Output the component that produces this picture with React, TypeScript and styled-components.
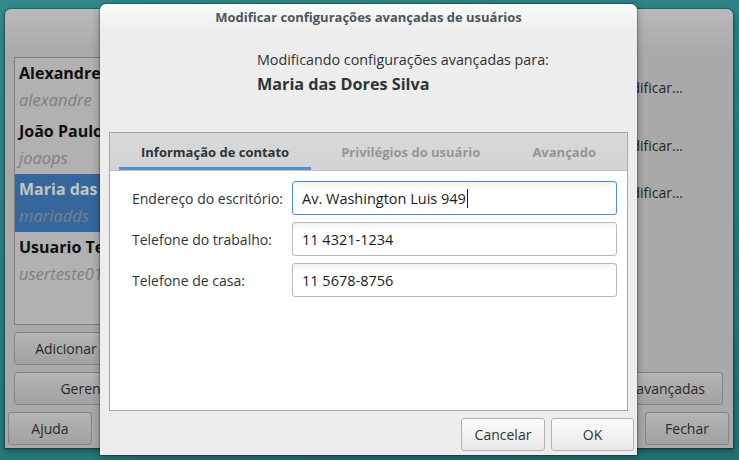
import * as React from 'react'
import styled, { createGlobalStyle } from 'styled-components'

const GlobalStyle = createGlobalStyle`
  html, body {
    margin: 0;
    padding: 0;
  }
  body {
    width: 739px;
    height: 460px;
    overflow: hidden;
    font-family: 'Open Sans', 'Noto Sans', sans-serif;
    color: #2e3436;
  }
`

const Desktop = styled.div`
  position: relative;
  width: 739px;
  height: 460px;
  overflow: hidden;
  background: linear-gradient(165deg, #32898a 0%, #2a7e7f 45%, #206f70 100%);
`

/* ---------- parent window (dimmed, behind the dialog) ---------- */

const ParentWindow = styled.div`
  position: absolute;
  left: 5px;
  top: 9px;
  width: 728px;
  height: 439px;
  box-sizing: border-box;
  border-radius: 6px 6px 0 0;
  background: linear-gradient(#bababa 0, #a9a9a9 44px, #a9a9a9 100%);
  box-shadow: 0 0 0 1px rgba(0, 0, 0, 0.18), 0 2px 5px rgba(0, 0, 0, 0.45);
  padding-top: 48px;
  display: flex;
  flex-direction: column;
`

const ParentMain = styled.div`
  display: grid;
  grid-template-columns: 1fr 1fr;
  grid-template-rows: 268px 33px 33px;
  row-gap: 7px;
  padding: 0 10px 0 9px;
`

const UserList = styled.div`
  grid-column: 1;
  grid-row: 1;
  width: 112px;
  border: 1px solid #7e7e7e;
  border-right: none;
  background: #b1b1b1;
  box-sizing: border-box;
  overflow: hidden;
`

const UserRow = styled.div<{ $selected?: boolean }>`
  height: 58px;
  box-sizing: border-box;
  padding: 5px 4px 0;
  overflow: hidden;
  background: ${(p) => (p.$selected ? '#35679c' : 'transparent')};
`

const UserName = styled.div<{ $selected?: boolean }>`
  font-size: 16px;
  font-weight: 700;
  line-height: 20px;
  color: ${(p) => (p.$selected ? '#c4c4c4' : '#0f0f0f')};
  white-space: nowrap;
`

const UserLogin = styled.div<{ $selected?: boolean }>`
  margin-top: 7px;
  font-size: 16.5px;
  font-style: italic;
  line-height: 20px;
  color: ${(p) => (p.$selected ? '#74808f' : '#7f7f7f')};
  white-space: nowrap;
`

const DetailPane = styled.div`
  grid-column: 2;
  grid-row: 1;
  display: flex;
  flex-direction: column;
  align-items: flex-end;
  padding: 21px 40px 0 0;
`

const DetailLink = styled.div<{ $gap: number }>`
  margin-top: ${(p) => p.$gap}px;
  font-size: 14px;
  line-height: 20px;
  color: #262626;
  white-space: nowrap;
`

const ParentButton = styled.div<{ $width?: number }>`
  box-sizing: border-box;
  width: ${(p) => (p.$width ? `${p.$width}px` : 'auto')};
  height: 33px;
  padding: 0 17px;
  display: flex;
  align-items: center;
  justify-content: center;
  border: 1px solid #848484;
  border-radius: 3px;
  background: linear-gradient(#b4b4b4, #a2a2a2);
  font-size: 14px;
  color: #2a2a2a;
  white-space: nowrap;
`

const LeftButtons = styled.div<{ $row: number }>`
  grid-column: 1;
  grid-row: ${(p) => p.$row};
  display: flex;
  gap: 6px;
`

const RightButtons = styled.div<{ $row: number }>`
  grid-column: 2;
  grid-row: ${(p) => p.$row};
  display: flex;
  justify-content: flex-end;
`

const ParentFooter = styled.div`
  margin-top: 7px;
  height: 34px;
  padding: 0 4px 0 3px;
  display: flex;
  justify-content: space-between;
`

/* ---------- dialog ---------- */

const Dialog = styled.div`
  position: absolute;
  left: 100px;
  top: 4px;
  width: 537px;
  height: 451px;
  box-sizing: border-box;
  border-radius: 6px 6px 0 0;
  background: linear-gradient(#fbfbfb 0, #ededed 28px, #ededed 100%);
  box-shadow: 0 0 0 1px rgba(0, 0, 0, 0.22), 0 2px 8px rgba(0, 0, 0, 0.35);
  display: flex;
  flex-direction: column;
`

const TitleBar = styled.div`
  height: 26px;
  display: flex;
  align-items: center;
  justify-content: center;
  font-size: 13px;
  font-weight: 700;
  color: #4b565c;
`

const Header = styled.div`
  height: 102px;
  box-sizing: border-box;
  padding: 20px 0 0 157px;
`

const HeaderLine = styled.div`
  font-size: 14.3px;
  line-height: 20px;
  color: #2e3436;
`

const HeaderName = styled.div`
  margin-top: 3px;
  font-size: 16.2px;
  font-weight: 700;
  line-height: 22px;
  color: #2e3436;
`

const Notebook = styled.div`
  margin: 0 9px;
  height: 279px;
  box-sizing: border-box;
  border: 1px solid #a9a9a9;
  background: #ffffff;
  display: flex;
  flex-direction: column;
`

const TabBar = styled.div`
  height: 37px;
  flex: none;
  padding: 0 9px;
  display: flex;
  gap: 8px;
  background: linear-gradient(#d9d9d9, #d3d3d3);
  border-bottom: 1px solid #c4c4c4;
`

const Tab = styled.div<{ $active?: boolean }>`
  box-sizing: border-box;
  padding: 3px 22px 0;
  display: flex;
  align-items: center;
  font-size: 13px;
  font-weight: 700;
  white-space: nowrap;
  color: ${(p) => (p.$active ? '#2e3436' : '#959595')};
  border-bottom: 3px solid ${(p) => (p.$active ? '#4a90d9' : 'transparent')};
`

const Form = styled.div`
  display: grid;
  grid-template-columns: 160px 1fr;
  grid-auto-rows: 34px;
  row-gap: 7px;
  align-items: center;
  padding: 10px 10px 0 22px;
`

const FieldLabel = styled.div`
  font-size: 14px;
  color: #2e3436;
  white-space: nowrap;
`

const Entry = styled.div<{ $focused?: boolean }>`
  height: 34px;
  box-sizing: border-box;
  padding: 0 9px;
  display: flex;
  align-items: center;
  border: 1px solid ${(p) => (p.$focused ? '#4a90d9' : '#b8b8b8')};
  border-radius: 3px;
  background: linear-gradient(#f3f3f3, #ffffff 8px);
  font-size: 14.5px;
  color: #1c1c1c;
  white-space: nowrap;
`

const Caret = styled.span`
  display: inline-block;
  width: 1px;
  height: 19px;
  margin-left: 1px;
  background: #1c1c1c;
`

const DialogFooter = styled.div`
  display: flex;
  justify-content: flex-end;
  gap: 6px;
  padding: 7px 3px 0;
`

const DialogButton = styled.div<{ $width: number }>`
  box-sizing: border-box;
  width: ${(p) => p.$width}px;
  height: 33px;
  display: flex;
  align-items: center;
  justify-content: center;
  border: 1px solid #b3b3b3;
  border-radius: 3px;
  background: linear-gradient(#fbfbfb, #e9e9e9);
  font-size: 14px;
  color: #2e3436;
`

const users = [
  { name: 'Alexandre Souza', login: 'alexandre' },
  { name: 'João Paulo Santos', login: 'joaops' },
  { name: 'Maria das Dores Silva', login: 'mariadds', selected: true },
  { name: 'Usuario Teste', login: 'userteste01' },
]

const fields = [
  { label: 'Endereço do escritório:', value: 'Av. Washington Luis 949', focused: true },
  { label: 'Telefone do trabalho:', value: '11 4321-1234' },
  { label: 'Telefone de casa:', value: '11 5678-8756' },
]

const App = () => (
  <>
    <GlobalStyle />
    <Desktop>
      <ParentWindow>
        <ParentMain>
          <UserList>
            {users.map((u) => (
              <UserRow key={u.login} $selected={u.selected}>
                <UserName $selected={u.selected}>{u.name}</UserName>
                <UserLogin $selected={u.selected}>{u.login}</UserLogin>
              </UserRow>
            ))}
          </UserList>
          <DetailPane>
            <DetailLink $gap={0}>Modificar...</DetailLink>
            <DetailLink $gap={38}>Modificar...</DetailLink>
            <DetailLink $gap={27}>Modificar...</DetailLink>
          </DetailPane>
          <LeftButtons $row={2}>
            <ParentButton $width={104}>Adicionar</ParentButton>
          </LeftButtons>
          <LeftButtons $row={3}>
            <ParentButton $width={206}>Gerenciar grupos</ParentButton>
          </LeftButtons>
          <RightButtons $row={3}>
            <ParentButton>Configurações avançadas</ParentButton>
          </RightButtons>
        </ParentMain>
        <ParentFooter>
          <ParentButton $width={84}>Ajuda</ParentButton>
          <ParentButton $width={84}>Fechar</ParentButton>
        </ParentFooter>
      </ParentWindow>

      <Dialog>
        <TitleBar>Modificar configurações avançadas de usuários</TitleBar>
        <Header>
          <HeaderLine>Modificando configurações avançadas para:</HeaderLine>
          <HeaderName>Maria das Dores Silva</HeaderName>
        </Header>
        <Notebook>
          <TabBar>
            <Tab $active>Informação de contato</Tab>
            <Tab>Privilégios do usuário</Tab>
            <Tab>Avançado</Tab>
          </TabBar>
          <Form>
            {fields.map((f) => (
              <React.Fragment key={f.label}>
                <FieldLabel>{f.label}</FieldLabel>
                <Entry $focused={f.focused}>
                  {f.value}
                  {f.focused && <Caret />}
                </Entry>
              </React.Fragment>
            ))}
          </Form>
        </Notebook>
        <DialogFooter>
          <DialogButton $width={84}>Cancelar</DialogButton>
          <DialogButton $width={83}>OK</DialogButton>
        </DialogFooter>
      </Dialog>
    </Desktop>
  </>
)

export default App
